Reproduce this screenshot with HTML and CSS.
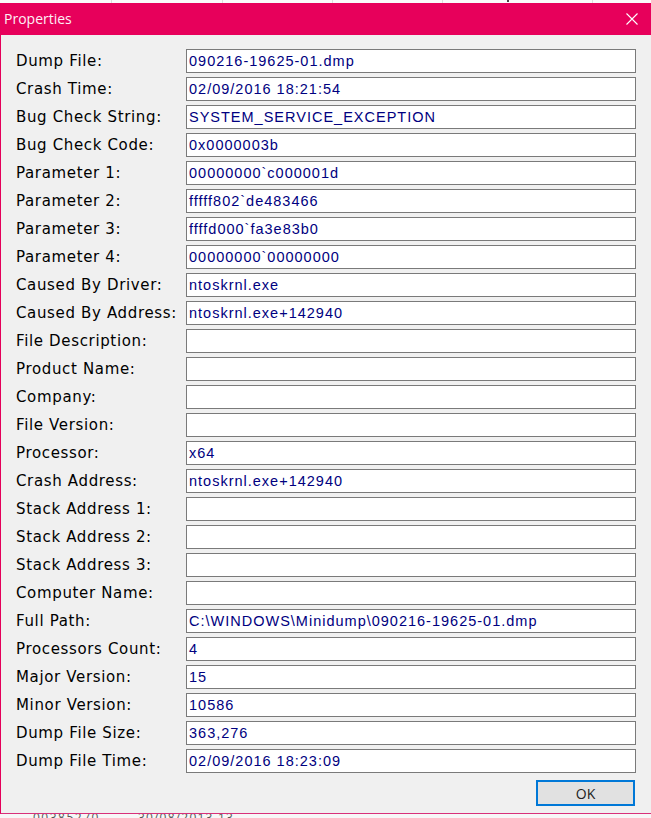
FILE: index.html
```html
<!DOCTYPE html>
<html>
<head>
<meta charset="utf-8">
<title>Properties</title>
<link rel="stylesheet" href="styles.css">
</head>
<body>
<div class="page">
  <div class="bg-header">
    <div class="bg-col c1"></div>
    <div class="bg-col c2"></div>
    <div class="bg-col c3"></div>
    <div class="bg-col c4"></div>
    <div class="bg-col c5"><span class="bg-mark"></span></div>
    <div class="bg-col c6"></div>
  </div>
  <div class="dialog">
    <div class="titlebar">
      <span class="title">Properties</span>
      <svg class="close" width="12" height="12" viewBox="0 0 12 12"><path d="M0.5 0.5 L11.5 11.5 M11.5 0.5 L0.5 11.5" stroke="#fff" stroke-width="1.1" fill="none"/></svg>
    </div>
    <div class="body">
      <div class="grid">
        <div class="label">Dump File:</div><div class="field">090216-19625-01.dmp</div>
        <div class="label">Crash Time:</div><div class="field">02/09/2016 18:21:54</div>
        <div class="label">Bug Check String:</div><div class="field">SYSTEM_SERVICE_EXCEPTION</div>
        <div class="label">Bug Check Code:</div><div class="field">0x0000003b</div>
        <div class="label">Parameter 1:</div><div class="field">00000000`c000001d</div>
        <div class="label">Parameter 2:</div><div class="field">fffff802`de483466</div>
        <div class="label">Parameter 3:</div><div class="field">ffffd000`fa3e83b0</div>
        <div class="label">Parameter 4:</div><div class="field">00000000`00000000</div>
        <div class="label">Caused By Driver:</div><div class="field">ntoskrnl.exe</div>
        <div class="label">Caused By Address:</div><div class="field">ntoskrnl.exe+142940</div>
        <div class="label">File Description:</div><div class="field"></div>
        <div class="label">Product Name:</div><div class="field"></div>
        <div class="label">Company:</div><div class="field"></div>
        <div class="label">File Version:</div><div class="field"></div>
        <div class="label">Processor:</div><div class="field">x64</div>
        <div class="label">Crash Address:</div><div class="field">ntoskrnl.exe+142940</div>
        <div class="label">Stack Address 1:</div><div class="field"></div>
        <div class="label">Stack Address 2:</div><div class="field"></div>
        <div class="label">Stack Address 3:</div><div class="field"></div>
        <div class="label">Computer Name:</div><div class="field"></div>
        <div class="label">Full Path:</div><div class="field">C:\WINDOWS\Minidump\090216-19625-01.dmp</div>
        <div class="label">Processors Count:</div><div class="field">4</div>
        <div class="label">Major Version:</div><div class="field">15</div>
        <div class="label">Minor Version:</div><div class="field">10586</div>
        <div class="label">Dump File Size:</div><div class="field">363,276</div>
        <div class="label">Dump File Time:</div><div class="field">02/09/2016 18:23:09</div>
      </div>
      <div class="footer">
        <button class="ok">OK</button>
      </div>
    </div>
  </div>
  <div class="bg-rows">
    <span class="bg-t1">00385270</span>
    <span class="bg-t2">30/08/2013 13</span>
  </div>
</div>
</body>
</html>
```

FILE: styles.css
```css
html, body {
  margin: 0;
  padding: 0;
}
body {
  width: 651px;
  height: 818px;
  overflow: hidden;
  background: #f7f7f7;
}
.page {
  width: 651px;
  height: 818px;
  display: flex;
  flex-direction: column;
}
.bg-header {
  height: 3px;
  display: flex;
  background: #fafafa;
  flex: none;
}
.bg-col {
  height: 3px;
  border-right: 1px solid #dcdcdc;
  box-sizing: border-box;
  position: relative;
}
.c1 { width: 112px; }
.c2 { width: 111px; }
.c3 { width: 110px; }
.c4 { width: 110px; }
.c5 { width: 150px; }
.c6 { flex: 1; border-right: none; }
.bg-mark {
  position: absolute;
  left: 64px;
  top: 0;
  width: 2px;
  height: 2px;
  background: #444;
}
.dialog {
  flex: none;
  border-left: 1px solid #e5005a;
  border-bottom: 1px solid #d8307a;
  background: #f0f0f0;
}
.titlebar {
  height: 32px;
  background: #e7005b;
  display: flex;
  align-items: center;
  justify-content: space-between;
  padding: 0 13px 0 3px;
}
.title {
  font-family: "Open Sans", "Noto Sans", sans-serif;
  font-size: 14px;
  color: #fdf0f5;
  margin-top: -1px;
}
.close {
  display: block;
}
.body {
  padding: 14px 15px 7px 15px;
}
.grid {
  display: grid;
  grid-template-columns: 170px 450px;
  grid-auto-rows: 24px;
  row-gap: 4px;
}
.label {
  font-family: "DejaVu Sans", sans-serif;
  font-size: 15px;
  letter-spacing: 0.65px;
  color: #000;
  display: flex;
  align-items: center;
  white-space: nowrap;
}
.field {
  box-sizing: border-box;
  border: 1px solid #7a7a7a;
  background: #fff;
  font-family: "Liberation Sans", Arial, sans-serif;
  font-size: 14.5px;
  letter-spacing: 1px;
  color: #000080;
  display: flex;
  align-items: center;
  padding: 0 2px 0 2px;
  white-space: nowrap;
  overflow: hidden;
}
.footer {
  display: flex;
  justify-content: flex-end;
  margin-top: 7px;
  padding-right: 1px;
}
.ok {
  width: 99px;
  height: 26px;
  box-sizing: border-box;
  border: 2px solid #0078d7;
  background: #e1e1e1;
  font-family: "Open Sans", "Noto Sans", sans-serif;
  font-size: 14px;
  color: #222;
  padding: 0;
  margin: 0;
}
.bg-rows {
  flex: 1;
  overflow: hidden;
  background: #f7f7f7;
  font-family: "Open Sans", sans-serif;
  font-size: 12px;
  line-height: 12px;
  color: #555;
  display: flex;
}
.bg-t1 {
  margin: -2px 0 0 33px;
  letter-spacing: 1.5px;
}
.bg-t2 {
  margin: -2px 0 0 38px;
  letter-spacing: 1.2px;
}
```
